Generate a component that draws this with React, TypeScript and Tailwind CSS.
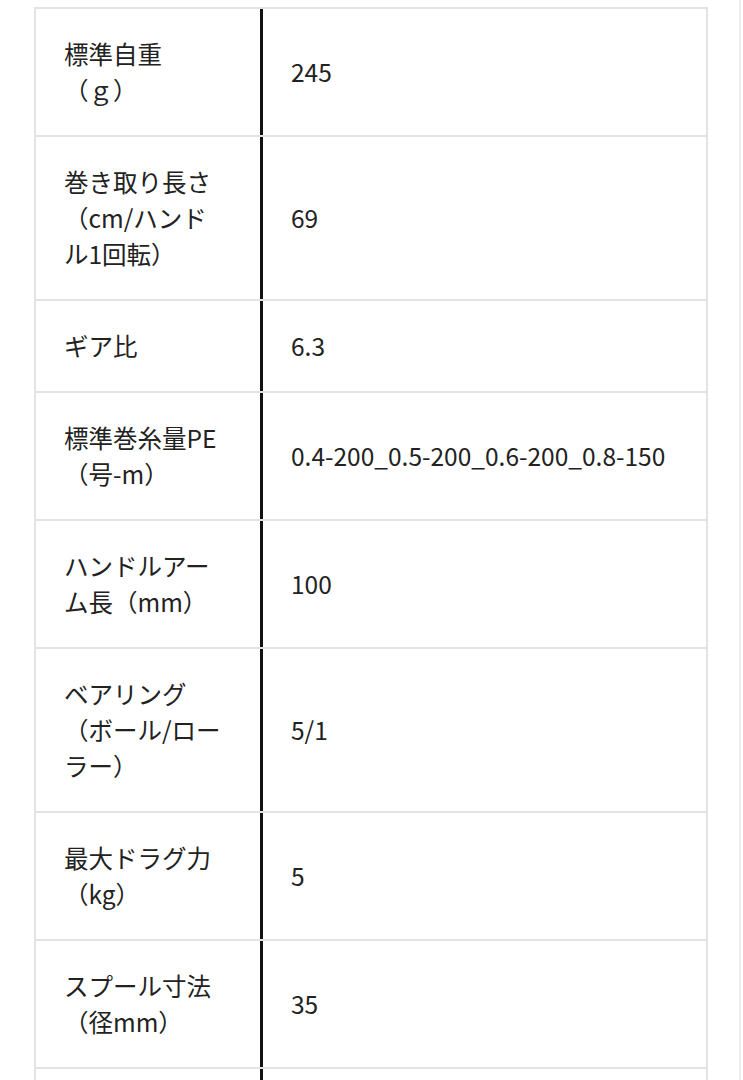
type Spec = { label: string; value: string };

const specs: Spec[] = [
  { label: "標準自重（ｇ）", value: "245" },
  { label: "巻き取り長さ（cm/ハンドル1回転）", value: "69" },
  { label: "ギア比", value: "6.3" },
  { label: "標準巻糸量PE（号-m）", value: "0.4-200_0.5-200_0.6-200_0.8-150" },
  { label: "ハンドルアーム長（mm）", value: "100" },
  { label: "ベアリング（ボール/ローラー）", value: "5/1" },
  { label: "最大ドラグ力（kg）", value: "5" },
  { label: "スプール寸法（径mm）", value: "35" },
  { label: "本体価格（円）", value: "オープン" },
];

function SpecRow({ spec, first }: { spec: Spec; first: boolean }) {
  return (
    <div className={first ? "flex" : "flex border-t-2 border-[#e3e3e3]"}>
      <div className="w-[224px] shrink-0 py-[27px] pl-[28px] pr-[39px]">{spec.label}</div>
      <div className="flex flex-1 items-center border-l-[3px] border-[#111] pl-[28px] pr-4">
        {spec.value}
      </div>
    </div>
  );
}

export default function App() {
  return (
    <div
      className="min-h-screen w-[741px] border-r-2 border-[#ececec] bg-white pl-[34px] pt-[7px] text-[24.5px] leading-[36px] text-[#222] [text-spacing-trim:space-all]"
      style={{ fontFamily: '"Noto Sans CJK JP", "Noto Sans", sans-serif' }}
    >
      <div className="w-[674px] border-2 border-[#e3e3e3]">
        {specs.map((spec, i) => (
          <SpecRow key={spec.label} spec={spec} first={i === 0} />
        ))}
      </div>
    </div>
  );
}
